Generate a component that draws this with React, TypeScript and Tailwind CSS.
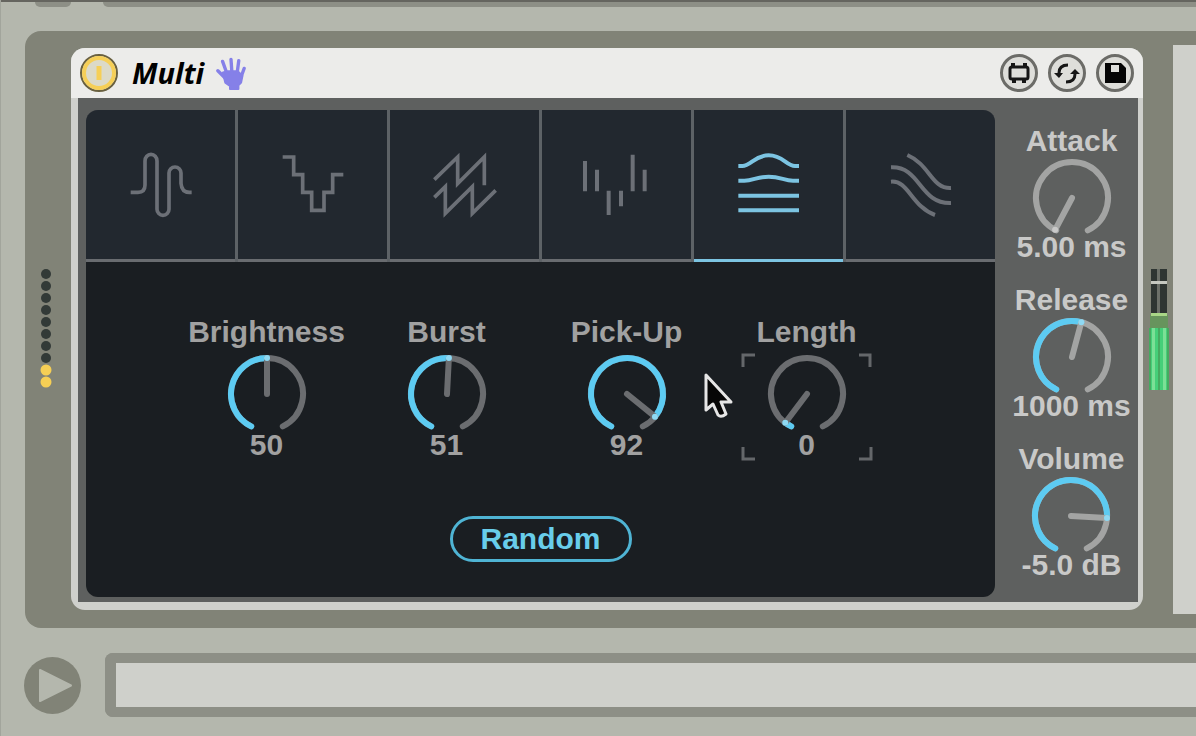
import React, { useState } from "react";

const START = -154;

function point(angle: number, radius: number) {
  const a = (angle * Math.PI) / 180;
  return [40 + radius * Math.sin(a), 40 - radius * Math.cos(a)];
}

function arc(from: number, to: number) {
  const [x1, y1] = point(from, 36);
  const [x2, y2] = point(to, 36);
  return `M${x1} ${y1}A36 36 0 ${to - from > 180 ? 1 : 0} 1 ${x2} ${y2}`;
}

type DialProps = {
  id: string;
  label: string;
  text: string;
  angle: number;
  filled?: boolean;
  side?: boolean;
  focused?: boolean;
};

function Dial({ id, label, text, angle, filled = true, side = false, focused = false }: DialProps) {
  const tone = side ? "#a3a4a3" : "#6b6d70";
  const [px, py] = point(angle, 36);
  return (
    <div
      className={`flex flex-col items-center text-[30px] leading-[30px] font-bold whitespace-nowrap ${
        side ? "gap-0 text-[#c9c9c8]" : "gap-0.5 text-[#a1a1a1]"
      }`}
    >
      <label htmlFor={id}>{label}</label>
      <div className={`relative ${side ? "mt-0.5" : "mt-[5px]"}`}>
        <svg width="80" height="74" viewBox="0 0 80 74" className="block overflow-visible" fill="none" strokeWidth="6" strokeLinecap="round">
          <path d={arc(START, -START)} stroke={tone} />
          {filled && <path d={arc(START, angle)} stroke="#5dcbf2" />}
          <path d={`M40 40L${px} ${py}`} stroke={tone} />
          {(filled || side) && <circle cx={px} cy={py} r="3" fill={filled ? "#8fd9f3" : "#c9c9c8"} />}
        </svg>
        {focused && (
          <svg width="132" height="108" viewBox="0 0 132 108" className="absolute -top-px -left-[26px]" fill="none" stroke="#64676a" strokeWidth="3">
            <path d="M2 14V2H14M118 2H129V14M2 94V106H14M118 106H130V94" />
          </svg>
        )}
        <input
          id={id}
          type="range"
          min={-154}
          max={154}
          defaultValue={angle}
          aria-valuetext={text}
          className="absolute inset-0 h-full w-full cursor-default opacity-0"
        />
      </div>
      <output htmlFor={id}>{text}</output>
    </div>
  );
}

const modes = [
  {
    name: "Sine",
    box: "142 154 198 198",
    art: <path d="M150 275H172Q193 275 193 253V181A18 20 0 0 1 229 181V326A18 18 0 0 0 265 326V217A18 18 0 0 1 301 217V248Q303 275 326 275H333" />,
  },
  {
    name: "Steps",
    box: "599 154 198 198",
    art: <path d="M607 169H640V222H667V275H694V329H731V275H757V222H789" />,
  },
  {
    name: "Saw",
    box: "126 154 198 198",
    art: <path d="M133 237L203 169V249L283 169V254M133 290L166 258V338L247 258V338L317 269" />,
  },
  {
    name: "Pulses",
    box: "583 154 198 198",
    art: <path strokeWidth="12" d="M586 181V272M622 207V272M657 270V343M694 270V317M729 162V272M765 207V272" />,
  },
  {
    name: "Membrane",
    box: "139 154 198 198",
    art: (
      <path
        strokeWidth="12"
        d="M146 196H158C184 196 194 164 237 164S290 196 316 196H328M146 240H164C190 240 202 228 237 228S284 240 310 240H328M146 285H328M146 329H328"
      />
    ),
  },
  {
    name: "Waves",
    box: "594 154 198 198",
    art: (
      <path
        strokeWidth="12"
        d="M652 163C720 192 725 265 783 262M603 200C692 196 688 310 783 307M603 243C655 238 665 318 735 343"
      />
    ),
  },
];

const roundButton =
  "flex size-[38px] items-center justify-center rounded-full border-[3px] border-[#6c6c68] bg-[#dededa] text-[#161616]";

export default function App() {
  const [mode, setMode] = useState(4);
  return (
    <main className="flex min-h-screen flex-col overflow-hidden border-l border-[#a2a59c] bg-[#b4b7ad] font-['Liberation_Sans',Arial,sans-serif]">
      <div className="flex h-[7px] gap-8 overflow-hidden border-t-2 border-[#65655f] pl-[34px]">
        <div className="h-full w-9 rounded-b-full bg-[#8d8f86]" />
        <div className="h-full flex-1 rounded-bl-lg bg-[#8d8f86]" />
      </div>

      <section className="mt-6 ml-6 flex rounded-l-2xl bg-[#818377]" aria-label="Device rack">
        <div className="flex w-[46px] items-center justify-center pr-1">
          <svg width="12" height="124" viewBox="0 0 12 124" aria-label="Input level">
            {Array.from({ length: 10 }, (_, i) => (
              <circle key={i} cx="6" cy={6 + i * 12} r={i > 7 ? 5.5 : 5} fill={i > 7 ? "#f6cf55" : "#323a37"} />
            ))}
          </svg>
        </div>

        <article className="mt-[17px] mb-[18px] min-w-0 flex-1 overflow-hidden rounded-[14px] bg-[#cfd0cc] pb-2">
          <header className="flex h-[50px] items-center bg-[#ececea] px-[9px]">
            <button aria-label="Device on" className="flex size-[38px] items-center justify-center rounded-full border-2 border-[#69603f] bg-[#dcdac8]">
              <svg width="34" height="34" viewBox="0 0 34 34">
                <circle cx="17" cy="17" r="15" fill="none" stroke="#f6cf57" strokeWidth="4" />
                <path d="M17 10V24" stroke="#f6cf57" strokeWidth="5" />
              </svg>
            </button>
            <h1 className="ml-3.5 font-['Open_Sans','Noto_Sans',sans-serif] text-[29px] leading-8 font-bold text-black italic">Multi</h1>
            <svg width="30" height="33" viewBox="0 0 88 98" className="ml-3" fill="#8580e8" stroke="#8580e8" strokeLinecap="round" strokeLinejoin="round" aria-hidden="true">
              <path d="M20 46L36 42L64 42L78 56L74 76L66 84V95H41V86L27 76Z" strokeWidth="6" />
              <path d="M5 41L28 64M19 13L33 52M44 7L47 50M67 11L62 50M83 34L70 70" fill="none" strokeWidth="10" />
            </svg>
            <div className="ml-auto flex gap-2.5">
              <button className={roundButton} aria-label="Edit device">
                <svg width="32" height="32" viewBox="1 1 32 32" fill="none" stroke="currentColor" strokeWidth="3">
                  <rect x="8" y="11" width="18" height="12" rx="2" />
                  <path d="M11 7V11M23 7V11M12 23V27M22 23V27" strokeWidth="4" />
                </svg>
              </button>
              <button className={roundButton} aria-label="Swap preset">
                <svg width="32" height="32" viewBox="1 1 32 32" fill="none" stroke="currentColor" strokeWidth="3">
                  <path d="M18 9Q9 9 9 17M16 26Q25 26 25 18" />
                  <path d="M4 17H13L9 22ZM20 18H30L25 13Z" fill="currentColor" stroke="none" />
                </svg>
              </button>
              <button className={roundButton} aria-label="Save preset">
                <svg width="32" height="32" viewBox="1 1 32 32">
                  <path d="M7 7H23L28 12V27H7Z" fill="#050505" />
                  <path d="M13 9H21V16H13Z" fill="#dededa" />
                </svg>
              </button>
            </div>
          </header>

          <div className="mr-[5px] ml-[7px] flex bg-[#5e605f] pl-2">
            <div className="relative mt-3 mb-[5px] min-w-0 flex-1 overflow-hidden rounded-xl bg-[#1a1e22]">
              <div role="tablist" aria-label="Model" className="grid grid-cols-6 gap-[3px] bg-[#5d6266]">
                {modes.map((m, i) => (
                  <button
                    key={m.name}
                    role="tab"
                    aria-selected={mode === i}
                    aria-label={m.name}
                    onClick={() => setMode(i)}
                    className={`flex h-[152px] items-center justify-center border-b-[3px] bg-[#22282f] ${
                      mode === i ? "border-[#7cc4e2] text-[#7cc4e2]" : "border-[#696c70] text-[#6c7077]"
                    }`}
                  >
                    <svg width="66" height="66" viewBox={m.box} className="overflow-visible" fill="none" stroke="currentColor" strokeWidth="11">
                      {m.art}
                    </svg>
                  </button>
                ))}
              </div>

              <div className="flex justify-center pt-[55px] pr-2">
                <div className="grid w-[720px] grid-cols-4">
                  <Dial id="brightness" label="Brightness" text="50" angle={0} />
                  <Dial id="burst" label="Burst" text="51" angle={3} />
                  <Dial id="pickup" label="Pick-Up" text="92" angle={129} />
                  <Dial id="length" label="Length" text="0" angle={-143} focused />
                </div>
              </div>

              <div className="mt-14 mb-[35px] flex justify-center">
                <button className="h-[46px] w-[182px] rounded-full border-[3px] border-[#4fb4d4] text-[30px] leading-[30px] font-bold text-[#68cdeb]">
                  Random
                </button>
              </div>

              <svg width="32" height="48" viewBox="0 0 32 48" className="pointer-events-none absolute top-[262px] left-[617px]" aria-hidden="true">
                <path d="M3 3V38L10 32L15 43Q18 46 23 42L18 30H28Z" fill="#060606" stroke="#e6e6e6" strokeWidth="3" strokeLinejoin="round" />
              </svg>
            </div>

            <div className="flex w-[143px] flex-col items-center gap-[23px] pt-7 pl-2.5">
              <Dial id="attack" label="Attack" text="5.00 ms" angle={-152} filled={false} side />
              <Dial id="release" label="Release" text="1000 ms" angle={15} side />
              <Dial id="volume" label="Volume" text="-5.0 dB" angle={93} side />
            </div>
          </div>
        </article>

        <div className="flex w-[30px] items-center justify-center pl-0.5">
          <svg width="20" height="122" viewBox="0 0 20 122" aria-label="Output level">
            <path d="M2 0H8V44H2ZM11 0H18V44H11Z" fill="#2e3532" />
            <path d="M8 0H11V44H8Z" fill="#6c7069" />
            <path d="M2 12H18V15H2Z" fill="#c5c8c0" />
            <path d="M1 46H19V60H1Z" fill="#67945d" />
            <path d="M2 44H18V47H2Z" fill="#a9d687" />
            <path d="M0 59H20V121H0Z" fill="#45aa60" />
            <path d="M2 59H9V121H2ZM11 59H18V121H11Z" fill="#45cf79" />
            <path d="M3 59H6V121H3ZM14 59H17V121H14Z" fill="#7be096" />
          </svg>
        </div>
        <div className="my-[14px] w-[23px] bg-[#cfd0cb]" />
      </section>

      <footer className="mt-[25px] mb-5 ml-[23px] flex items-center gap-6">
        <button aria-label="Preview" className="size-[57px]">
          <svg viewBox="0 0 57 57" className="block size-full">
            <circle cx="28.500" cy="28.500" r="28.500" fill="#818377" />
            <path d="M16 13L47 28.500L16 44Z" fill="#b4b7ad" stroke="#b4b7ad" strokeWidth="2" strokeLinejoin="round" />
          </svg>
        </button>
        <div className="h-16 flex-1 rounded-l-lg border-y-[10px] border-l-[11px] border-[#8d8f86] bg-[#cfd0cb]" role="status" />
      </footer>
    </main>
  );
}
